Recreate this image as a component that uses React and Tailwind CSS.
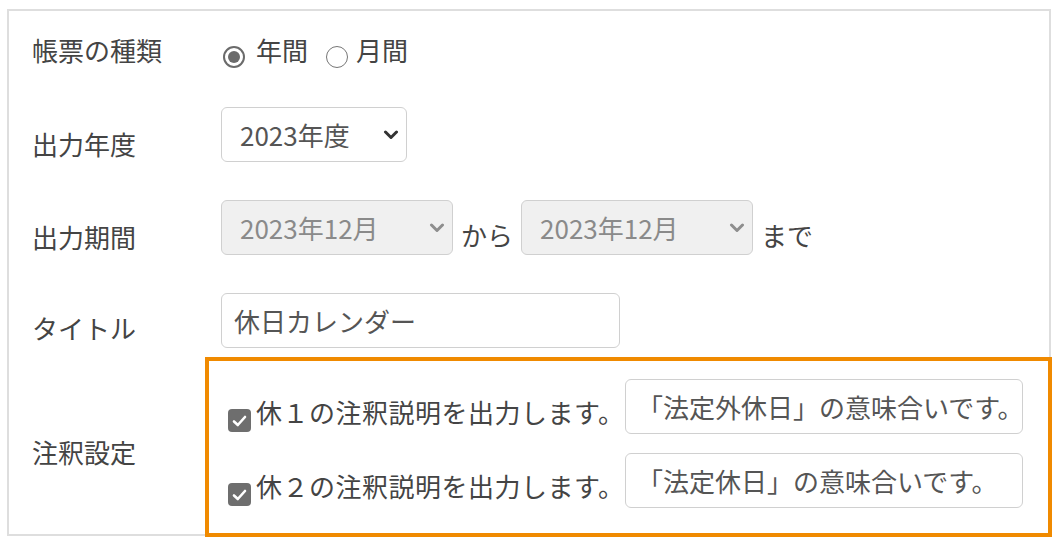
import React from 'react';

const Chevron = ({ disabled }) => (
  <svg
    width="16"
    height="10"
    viewBox="0 0 16 10"
    className="pointer-events-none absolute right-[8px] top-1/2 -translate-y-1/2"
  >
    <path
      d="M2.5 2 L8 7.5 L13.5 2"
      fill="none"
      stroke={disabled ? '#8e8e8e' : '#333333'}
      strokeWidth="3"
      strokeLinecap="round"
      strokeLinejoin="round"
    />
  </svg>
);

const Select = ({ value, width, disabled }) => (
  <div className={`relative ${width}`}>
    <select
      disabled={disabled}
      defaultValue={value}
      className={`h-[55px] w-full appearance-none rounded-[6px] border border-[#d0d0d0] pl-[18px] pr-[30px] text-[26px] outline-none disabled:opacity-100
        ${disabled ? 'bg-[#f0f0f0] text-[#8a8a8a]' : 'bg-white text-[#555]'}
      `}
    >
      <option value={value}>{value}</option>
    </select>
    <Chevron disabled={disabled} />
  </div>
);

const Radio = ({ checked }) =>
  checked ? (
    <span className="flex h-[22px] w-[22px] items-center justify-center rounded-full border-2 border-[#6b6b6b] bg-white">
      <span className="block h-[12px] w-[12px] rounded-full bg-[#6b6b6b]" />
    </span>
  ) : (
    <span className="block h-[22px] w-[22px] rounded-full border-[1.5px] border-[#767676] bg-white" />
  );

const Checkbox = () => (
  <span className="flex h-[23px] w-[23px] shrink-0 items-center justify-center rounded-[4px] bg-[#6e6e6e]">
    <svg width="15" height="12" viewBox="0 0 15 12">
      <path
        d="M2 6.5 L5.8 10 L13 2"
        fill="none"
        stroke="#fff"
        strokeWidth="2.6"
        strokeLinecap="round"
        strokeLinejoin="round"
      />
    </svg>
  </span>
);

const notes = [
  { no: '１', text: '「法定外休日」の意味合いです。' },
  { no: '２', text: '「法定休日」の意味合いです。' },
];

export default function App() {
  return (
    <div className="relative h-[543px] w-[1059px] overflow-hidden bg-white pl-[7px] pt-[9px] font-['Noto_Sans_CJK_JP',sans-serif] text-[26px] leading-none text-[#444]">
      <div className="h-[527px] w-[1044px] border-2 border-[#dedede] pl-[23px]">
        {/* 帳票の種類 */}
        <div className="mt-[11px] flex h-[56px] items-center">
          <div className="w-[189px]">帳票の種類</div>
          <div className="flex items-center">
            <span className="ml-[2px] mt-[14px]">
              <Radio checked />
            </span>
            <span className="ml-[11px]">年間</span>
            <span className="ml-[18px] mt-[14px]">
              <Radio />
            </span>
            <span className="ml-[8px]">月間</span>
          </div>
        </div>

        {/* 出力年度 */}
        <div className="mt-[29px] flex h-[55px] items-center">
          <div className="mt-[18px] w-[189px]">出力年度</div>
          <Select value="2023年度" width="w-[186px]" />
        </div>

        {/* 出力期間 */}
        <div className="mt-[38px] flex h-[55px] items-center">
          <div className="mt-[18px] w-[189px]">出力期間</div>
          <div className="flex items-center gap-[8px]">
            <Select value="2023年12月" width="w-[232px]" disabled />
            <span className="mt-[14px]">から</span>
            <Select value="2023年12月" width="w-[232px]" disabled />
            <span className="mt-[14px]">まで</span>
          </div>
        </div>

        {/* タイトル */}
        <div className="mt-[38px] flex h-[55px] items-center">
          <div className="mt-[14px] w-[189px]">タイトル</div>
          <input
            defaultValue="休日カレンダー"
            className="h-[55px] w-[399px] rounded-[6px] border border-[#d0d0d0] bg-white px-[12px] text-[26px] text-[#555] outline-none"
          />
        </div>

        {/* 注釈設定 */}
        <div className="mt-[31px] flex h-[129px] items-center">
          <div className="mt-[16px] w-[189px]">注釈設定</div>
          <div className="flex flex-col gap-[19px]">
            {notes.map((n) => (
              <div key={n.no} className="ml-[7px] flex h-[55px] items-center">
                <label className="mt-[10px] flex w-[397px] items-center">
                  <span className="mt-[18px]">
                    <Checkbox />
                  </span>
                  <span className="ml-[5px] whitespace-nowrap tracking-[0.5px]">
                    休{n.no}の注釈説明を出力します。
                  </span>
                </label>
                <input
                  defaultValue={n.text}
                  className="h-[55px] w-[398px] rounded-[6px] border border-[#d0d0d0] bg-white pl-[11px] pr-[4px] text-[26px] text-[#555] outline-none"
                />
              </div>
            ))}
          </div>
        </div>
      </div>

      {/* highlight frame */}
      <div className="pointer-events-none absolute left-[205px] top-[357px] h-[180px] w-[847px] border-4 border-[#f08a00]" />
    </div>
  );
}
